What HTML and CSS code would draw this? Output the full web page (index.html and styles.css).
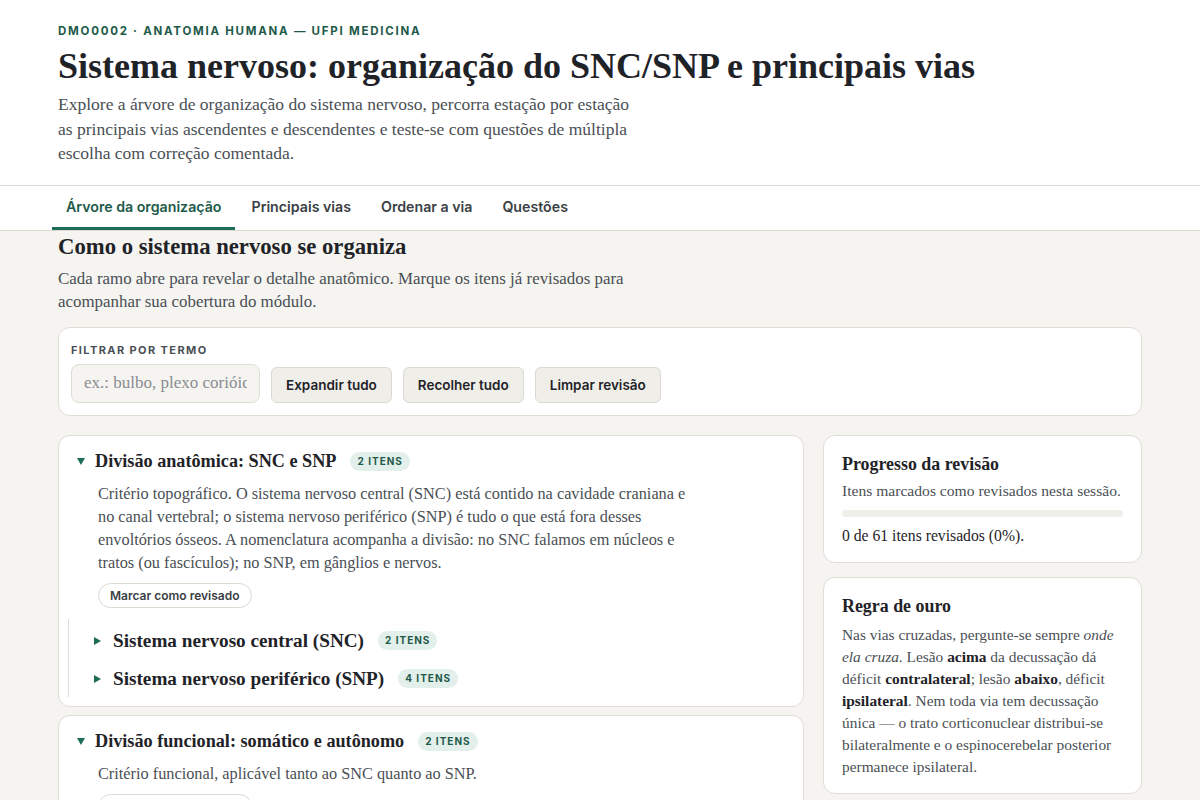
FILE: index.html
```html
<!DOCTYPE html>
<html lang="pt-BR">
<head>
<meta charset="utf-8">
<title>Sistema nervoso</title>
<link rel="stylesheet" href="styles.css">
</head>
<body>
<header class="hero">
  <div class="eyebrow">DMO0002 · ANATOMIA HUMANA — UFPI MEDICINA</div>
  <h1 class="title">Sistema nervoso: organização do SNC/SNP e principais vias</h1>
  <p class="lead">Explore a árvore de organização do sistema nervoso, percorra estação por estação as principais vias ascendentes e descendentes e teste-se com questões de múltipla escolha com correção comentada.</p>
</header>
<nav class="tabs">
  <a class="tab active">Árvore da organização</a>
  <a class="tab">Principais vias</a>
  <a class="tab">Ordenar a via</a>
  <a class="tab">Questões</a>
</nav>
<main class="main">
  <h2 class="section-title">Como o sistema nervoso se organiza</h2>
  <p class="section-lead">Cada ramo abre para revelar o detalhe anatômico. Marque os itens já revisados para acompanhar sua cobertura do módulo.</p>

  <div class="filter card">
    <div class="filter-label">FILTRAR POR TERMO</div>
    <div class="filter-row">
      <input class="filter-input" type="text" placeholder="ex.: bulbo, plexo corióide">
      <button class="btn">Expandir tudo</button>
      <button class="btn">Recolher tudo</button>
      <button class="btn">Limpar revisão</button>
    </div>
  </div>

  <div class="layout">
    <div class="tree">
      <section class="card node">
        <div class="node-head">
          <span class="caret down"></span>
          <span class="node-title">Divisão anatômica: SNC e SNP</span>
          <span class="badge">2 ITENS</span>
        </div>
        <p class="node-text">Critério topográfico. O sistema nervoso central (SNC) está contido na cavidade craniana e no canal vertebral; o sistema nervoso periférico (SNP) é tudo o que está fora desses envoltórios ósseos. A nomenclatura acompanha a divisão: no SNC falamos em núcleos e tratos (ou fascículos); no SNP, em gânglios e nervos.</p>
        <button class="pill">Marcar como revisado</button>
        <div class="children">
          <div class="child">
            <span class="caret right"></span>
            <span class="child-title">Sistema nervoso central (SNC)</span>
            <span class="badge">2 ITENS</span>
          </div>
          <div class="child">
            <span class="caret right"></span>
            <span class="child-title">Sistema nervoso periférico (SNP)</span>
            <span class="badge">4 ITENS</span>
          </div>
        </div>
      </section>

      <section class="card node">
        <div class="node-head">
          <span class="caret down"></span>
          <span class="node-title">Divisão funcional: somático e autônomo</span>
          <span class="badge">2 ITENS</span>
        </div>
        <p class="node-text">Critério funcional, aplicável tanto ao SNC quanto ao SNP.</p>
        <button class="pill">Marcar como revisado</button>
      </section>
    </div>

    <aside class="side">
      <div class="card side-card">
        <h3 class="side-title">Progresso da revisão</h3>
        <p class="side-sub">Itens marcados como revisados nesta sessão.</p>
        <div class="bar"><div class="bar-fill" style="width:0%"></div></div>
        <p class="side-count">0 de 61 itens revisados (0%).</p>
      </div>
      <div class="card side-card">
        <h3 class="side-title">Regra de ouro</h3>
        <p class="side-text">Nas vias cruzadas, pergunte-se sempre <em>onde ela cruza</em>. Lesão <strong>acima</strong> da decussação dá déficit <strong>contralateral</strong>; lesão <strong>abaixo</strong>, déficit <strong>ipsilateral</strong>. Nem toda via tem decussação única — o trato corticonuclear distribui-se bilateralmente e o espinocerebelar posterior permanece ipsilateral.</p>
      </div>
    </aside>
  </div>
</main>
</body>
</html>
```

FILE: styles.css
```css
* { box-sizing: border-box; }
html, body { margin: 0; padding: 0; }
body {
  background: #f5f4f0;
  font-family: "Liberation Serif", "DejaVu Serif", serif;
  color: #1f2328;
}
.hero {
  background: #ffffff;
  padding: 22px 58px 19px;
  border-bottom: 1px solid #dcd9d0;
}
.eyebrow {
  font-family: Inter, "Liberation Sans", sans-serif;
  font-size: 11.5px;
  font-weight: 700;
  letter-spacing: 1.75px;
  color: #1e5a4a;
  line-height: 18px;
}
.title {
  margin: 6px 0 6px;
  font-size: 36px;
  line-height: 40px;
  font-weight: 700;
  color: #1f2328;
}
.lead {
  margin: 0;
  max-width: 580px;
  font-size: 17.5px;
  line-height: 24.5px;
  color: #4a4f55;
}
.tabs {
  background: #ffffff;
  border-bottom: 1px solid #dcd9d0;
  display: flex;
  gap: 2px;
  padding: 0 52px;
  height: 45px;
}
.tab {
  font-family: Inter, "Liberation Sans", sans-serif;
  font-size: 14.2px;
  font-weight: 600;
  color: #3a3f45;
  padding: 12px 14px 0;
  border-bottom: 3px solid transparent;
}
.tab.active {
  color: #1e5a4a;
  border-bottom-color: #1e6b58;
}
.main {
  padding: 1px 58px 20px;
}
.section-title {
  margin: 0;
  font-size: 22.7px;
  line-height: 30px;
  font-weight: 700;
}
.section-lead {
  margin: 5px 0 0;
  max-width: 590px;
  font-size: 16.9px;
  line-height: 23px;
  color: #4a4f55;
}
.card {
  background: #ffffff;
  border: 1px solid #e0ddd4;
  border-radius: 12px;
}
.filter {
  margin-top: 14px;
  padding: 15px 12px 12px;
}
.filter-label {
  font-family: Inter, "Liberation Sans", sans-serif;
  font-size: 11px;
  font-weight: 700;
  letter-spacing: 1.4px;
  color: #4a4f55;
  line-height: 14px;
}
.filter-row {
  margin-top: 7px;
  display: flex;
  align-items: flex-end;
  gap: 11px;
}
.filter-input {
  width: 189px;
  height: 39px;
  border: 1px solid #e0ddd4;
  border-radius: 8px;
  background: #f5f4f0;
  padding: 0 12px;
  font-family: "Liberation Serif", serif;
  font-size: 17px;
  color: #1f2328;
}
.filter-input::placeholder { color: #8a8d90; }
.btn {
  height: 36px;
  padding: 0 14px;
  border: 1px solid #dcd9d0;
  border-radius: 6px;
  background: #efeee9;
  font-family: Inter, "Liberation Sans", sans-serif;
  font-size: 13.5px;
  font-weight: 600;
  color: #1f2328;
}
.layout {
  margin-top: 19px;
  display: grid;
  grid-template-columns: 746px 1fr;
  gap: 19px;
  align-items: start;
}
.tree { display: flex; flex-direction: column; gap: 8px; }
.node { padding: 14px 18px 9px; }
.node-head {
  display: flex;
  align-items: center;
  height: 24px;
}
.caret { display: inline-block; width: 0; height: 0; }
.caret.down {
  border-left: 4px solid transparent;
  border-right: 4px solid transparent;
  border-top: 7px solid #1e6b58;
  margin: 0 10px 0 0;
}
.caret.right {
  border-top: 4px solid transparent;
  border-bottom: 4px solid transparent;
  border-left: 7px solid #1e6b58;
  margin: 0 12px 0 0;
}
.node-title {
  font-size: 18.2px;
  font-weight: 700;
  color: #1f2328;
}
.child-title {
  font-size: 19.2px;
  font-weight: 700;
  color: #1f2328;
}
.badge {
  margin-left: 14px;
  font-family: Inter, "Liberation Sans", sans-serif;
  font-size: 10px;
  font-weight: 700;
  letter-spacing: 1px;
  color: #1e5a4a;
  background: #e3efea;
  border-radius: 10px;
  padding: 4px 7px 4px 7px;
  line-height: 11px;
}
.node-text {
  margin: 8px 0 0 21px;
  max-width: 605px;
  font-size: 16.3px;
  line-height: 23px;
  color: #4a4f55;
}
.pill {
  margin: 9px 0 0 21px;
  height: 25px;
  padding: 0 11px;
  border: 1px solid #dcd9d0;
  border-radius: 13px;
  background: #ffffff;
  font-family: Inter, "Liberation Sans", sans-serif;
  font-size: 12px;
  font-weight: 600;
  color: #3a3f45;
}
.children {
  margin: 11px 0 0 -9px;
  border-left: 1px solid #e0ddd4;
  padding: 10px 0 6px 25px;
  display: flex;
  flex-direction: column;
  gap: 14px;
}
.child {
  display: flex;
  align-items: center;
  height: 24px;
}
.side { display: flex; flex-direction: column; gap: 14px; }
.side-card { padding: 17px 18px 15px; }
.side-title {
  margin: 0;
  font-size: 17.9px;
  line-height: 22px;
  font-weight: 700;
}
.side-sub {
  margin: 6px 0 0;
  font-size: 15.6px;
  line-height: 20px;
  color: #4a4f55;
}
.bar {
  margin-top: 9px;
  height: 7px;
  background: #efeee9;
  border-radius: 4px;
  overflow: hidden;
}
.bar-fill { height: 100%; background: #1e6b58; }
.side-count {
  margin: 8px 0 0;
  font-size: 15.7px;
  line-height: 22px;
  color: #1f2328;
}
.side-text {
  margin: 7px 0 0;
  font-size: 15.4px;
  line-height: 22px;
  color: #4a4f55;
}
.side-text strong { color: #1f2328; }
```
